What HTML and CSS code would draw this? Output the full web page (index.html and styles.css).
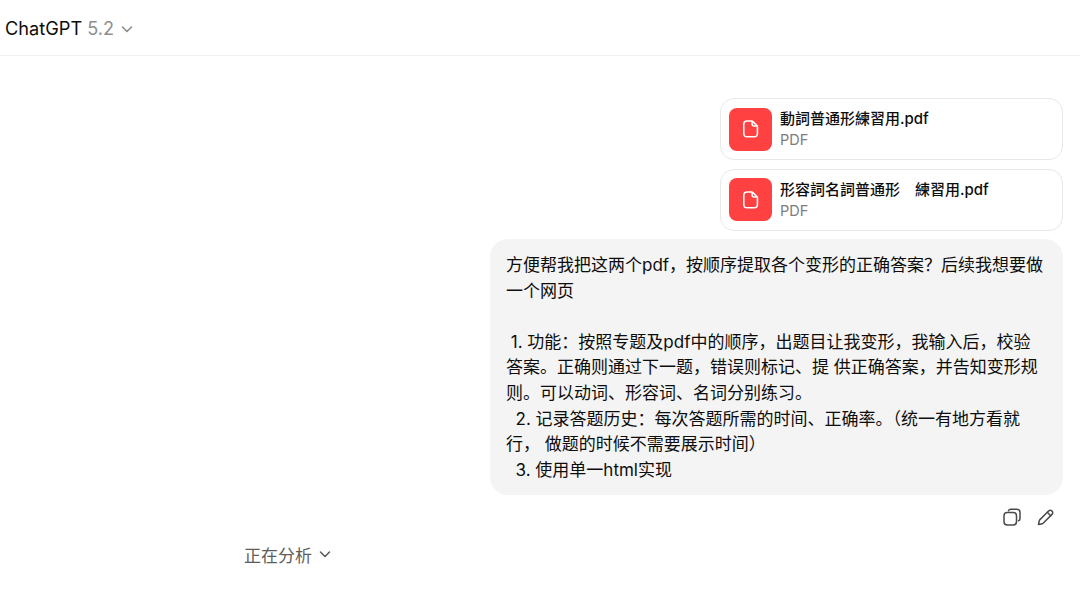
FILE: index.html
```html
<!DOCTYPE html>
<html lang="zh">
  <head>
    <meta charset="utf-8" />
    <title>ChatGPT</title>
    <link rel="stylesheet" href="styles.css">
  </head>
  <body>
    <header class="top-bar">
      <span class="model-name">ChatGPT</span>
      <span class="model-version">5.2</span>
      <svg class="chevron" width="14" height="14" viewBox="0 0 14 14" fill="none"><path d="M2.500 5l4.500 4.500L11.500 5" stroke="#8a8a8a" stroke-width="1.500" stroke-linecap="round" stroke-linejoin="round"/></svg>
    </header>

    <main class="thread">
      <div class="user-turn">
        <div class="file-card">
          <div class="file-icon">
            <svg width="20" height="20" viewBox="0 0 18 18" fill="none"><path d="M5.500 1.800h4.300a1 1 0 0 1 .7.300l4 4a1 1 0 0 1 .3.700v6.200a3 3 0 0 1-3 3h-6.300a3 3 0 0 1-3-3V4.800a3 3 0 0 1 3-3zM10 2v2.800a1.500 1.500 0 0 0 1.500 1.500h3" stroke="#fff" stroke-width="1.400" stroke-linejoin="round"/></svg>
          </div>
          <div class="file-info">
            <div class="file-name">動詞普通形練習用.pdf</div>
            <div class="file-type">PDF</div>
          </div>
        </div>
        <div class="file-card">
          <div class="file-icon">
            <svg width="20" height="20" viewBox="0 0 18 18" fill="none"><path d="M5.500 1.800h4.300a1 1 0 0 1 .7.300l4 4a1 1 0 0 1 .3.700v6.200a3 3 0 0 1-3 3h-6.300a3 3 0 0 1-3-3V4.800a3 3 0 0 1 3-3zM10 2v2.800a1.500 1.500 0 0 0 1.500 1.500h3" stroke="#fff" stroke-width="1.400" stroke-linejoin="round"/></svg>
          </div>
          <div class="file-info">
            <div class="file-name">形容詞名詞普通形　練習用.pdf</div>
            <div class="file-type">PDF</div>
          </div>
        </div>

        <div class="bubble">
          <p>方便帮我把这两个pdf，按顺序提取各个变形的正确答案？后续我想要做<br>一个网页</p>
          <p class="gap">&nbsp;1. 功能：按照专题及pdf中的顺序，出题目让我变形，我输入后，校验<br>答案。正确则通过下一题，错误则标记、提 供正确答案，并告知变形规<br>则。可以动词、形容词、名词分别练习。<br>&nbsp; 2. 记录答题历史：每次答题所需的时间、正确率。（统一有地方看就<br>行， 做题的时候不需要展示时间）<br>&nbsp; 3. 使用单一html实现</p>
        </div>

        <div class="actions">
          <svg width="20" height="20" viewBox="0 0 20 20" fill="none" stroke="#4a4a4a" stroke-width="1.500" stroke-linejoin="round" stroke-linecap="round"><rect x="2" y="5.500" width="12.500" height="12.500" rx="3.200"/><path d="M6.500 3.700A2.500 2.500 0 0 1 8.600 2.200h6.200A3.200 3.200 0 0 1 18 5.400v6.200a2.500 2.500 0 0 1-1.500 2.200"/></svg>
          <svg width="20" height="20" viewBox="0 0 20 20" fill="none" stroke="#4a4a4a" stroke-width="1.500" stroke-linejoin="round" stroke-linecap="round"><path d="M2.500 17.500l.7-3.600a2 2 0 0 1 .5-1L12.600 4a2.400 2.400 0 0 1 3.400 0 2.400 2.400 0 0 1 0 3.400l-8.900 8.900a2 2 0 0 1-1 .5z"/><path d="M11.300 5.300l3.400 3.400"/></svg>
        </div>
      </div>

      <div class="status">
        <span>正在分析</span>
        <svg width="14" height="14" viewBox="0 0 14 14" fill="none"><path d="M2.500 5l4.500 4.500L11.500 5" stroke="#5d5d5d" stroke-width="1.600" stroke-linecap="round" stroke-linejoin="round"/></svg>
      </div>
    </main>
  </body>
</html>
```

FILE: styles.css
```css
/* || Initial styles */

html {
  font-family: Inter, "Liberation Sans", "Noto Sans CJK SC", sans-serif;
}

* {
  box-sizing: border-box;
}

body {
  margin: 0;
  height: 602px;
  overflow: hidden;
  background-color: #fff;
  color: #0d0d0d;
}

/* || Top bar */

.top-bar {
  display: flex;
  align-items: center;
  height: 56px;
  padding: 1px 0 0 5px;
  border-bottom: 1px solid #f1f1f1;
  font-size: 18.2px;
}

.model-version {
  margin-left: 5px;
  color: #8f8f8f;
}

.chevron {
  margin-left: 6px;
  margin-top: 1px;
}

/* || Thread */

.thread {
  padding: 42px 17px 0 244px;
}

.user-turn {
  display: flex;
  flex-direction: column;
  align-items: flex-end;
}

.file-card {
  display: flex;
  align-items: center;
  gap: 8px;
  width: 343px;
  height: 62px;
  margin-bottom: 8.500px;
  padding: 0 8px;
  border: 1px solid #e8e8e8;
  border-radius: 14px;
  background-color: #fff;
}

.file-icon {
  display: flex;
  align-items: center;
  justify-content: center;
  width: 43px;
  height: 43px;
  border-radius: 8px;
  background-color: #ff4141;
}

.file-name {
  font-size: 15px;
  font-weight: 500;
  line-height: 21px;
  font-family: Inter, "Noto Sans CJK TC", sans-serif;
}

.file-type {
  font-size: 14.500px;
  line-height: 21px;
  color: #7d7d7d;
}

.bubble {
  width: 573px;
  height: 256px;
  padding: 14px 16px;
  border-radius: 18px;
  background-color: #f4f4f4;
  font-size: 17px;
  line-height: 25.6px;
}

.bubble p {
  margin: 0;
}

.bubble .gap {
  margin-top: 25.6px;
}

.actions {
  display: flex;
  gap: 14px;
  margin-top: 11.500px;
  padding-right: 7px;
}

.status {
  display: flex;
  align-items: center;
  gap: 6px;
  margin-top: 15px;
  font-size: 17px;
  color: #5d5d5d;
}
```
